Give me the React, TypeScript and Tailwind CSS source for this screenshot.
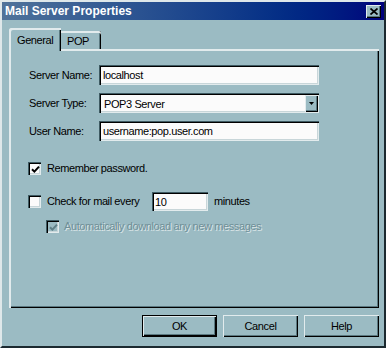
import React from "react";

const raised =
  "shadow-[inset_1px_1px_0_#e2ebed,inset_-1px_-1px_0_#000000,inset_-2px_-2px_0_#5a7880]";
const sunken =
  "shadow-[inset_1px_1px_0_#3e5a62,inset_2px_2px_0_#000000,inset_-1px_-1px_0_#e2ebed,inset_-2px_-2px_0_#c8d6d9]";

function Check({ disabled }: { disabled?: boolean }) {
  return (
    <svg width="9" height="9" viewBox="0 0 9 9" className="block">
      <path
        d="M1 4.2 L3.4 6.6 L8 1.6"
        fill="none"
        stroke={disabled ? "#5f7f87" : "#000"}
        strokeWidth="2"
      />
    </svg>
  );
}

function CheckBox({ checked, disabled }: { checked?: boolean; disabled?: boolean }) {
  return (
    <div
      className={`w-[13px] h-[13px] shrink-0 flex items-center justify-center pt-[1px] pl-[1px] ${sunken} ${
        disabled ? "bg-[#9bbbc3]" : "bg-[#fbfbfb]"
      }`}
    >
      {checked ? <Check disabled={disabled} /> : null}
    </div>
  );
}

function Field({ value, w }: { value: string; w: string }) {
  return (
    <div className={`${w} h-[20px] bg-[#fbfbfb] ${sunken} flex items-center pl-[4px] pt-[1px] text-black whitespace-nowrap`}>
      {value}
    </div>
  );
}

function Btn({ label, def }: { label: string; def?: boolean }) {
  return (
    <div
      className={`w-[75px] h-[22px] box-border ${def ? "border border-black" : ""} bg-[#9bbbc3] ${raised} flex items-center justify-center text-black`}
    >
      {label}
    </div>
  );
}

export default function App() {
  return (
    <div className="w-[386px] h-[348px] box-border bg-[#9bbbc3] border-2 border-t-[#dfe8ea] border-l-[#dfe8ea] border-r-[#1c2a30] border-b-[#1c2a30] flex flex-col font-['Liberation_Sans',Arial,sans-serif] text-[11px] tracking-[-0.4px] leading-none text-black select-none whitespace-nowrap">
      {/* Title bar */}
      <div className="h-[18px] shrink-0 flex items-center pl-[3px] pr-[3px] bg-gradient-to-r from-[#50739a] to-[#00007c]">
        <span className="font-bold text-[12px] tracking-normal text-white">
          Mail Server Properties
        </span>
        <div className={`ml-auto w-[15px] h-[13px] bg-[#9bbbc3] ${raised} flex items-center justify-center`}>
          <svg width="8" height="7" viewBox="0 0 8 7" className="block">
            <path d="M0.5 0.5 L7.5 6.5 M7.5 0.5 L0.5 6.5" stroke="#000" strokeWidth="1.7" fill="none" />
          </svg>
        </div>
      </div>

      {/* Tabs */}
      <div className="pt-[8px] pl-[7px] h-[29px] shrink-0 flex items-start">
        <div className="relative z-10 w-[52px] h-[23px] bg-[#9bbbc3] rounded-tl-[2px] shadow-[inset_2px_2px_0_#e2ebed,inset_-1px_0_0_#000000,inset_-2px_0_0_#5a7880] flex items-center pl-[8px] pt-[1px]">
          General
        </div>
        <div className="mt-[3px] w-[40px] h-[18px] bg-[#9bbbc3] rounded-tr-[2px] shadow-[inset_0_2px_0_#e2ebed,inset_-1px_0_0_#000000,inset_-2px_0_0_#5a7880] flex items-center pl-[6px] pt-[2px]">
          POP
        </div>
      </div>

      {/* Panel */}
      <div className="ml-[7px] w-[370px] h-[259px] shrink-0 bg-[#9bbbc3] shadow-[inset_2px_2px_0_#e2ebed,inset_-1px_-1px_0_#000000,inset_-2px_-2px_0_#5a7880] pt-[16px] pl-[19px] flex flex-col">
        <div className="flex items-center h-[20px]">
          <div className="w-[71px] pl-[1px]">Server Name:</div>
          <Field value="localhost" w="w-[220px]" />
        </div>
        <div className="flex items-center h-[20px] mt-[8px]">
          <div className="w-[71px] pl-[1px]">Server Type:</div>
          <div className={`w-[220px] h-[20px] bg-[#fbfbfb] ${sunken} flex pt-[2px] pl-[2px] pr-[1px] pb-[1px]`}>
            <div className="flex-1 flex items-center pl-[3px] pt-[1px]">POP3 Server</div>
            <div className={`w-[13px] h-full bg-[#9bbbc3] ${raised} flex items-center justify-center pb-[1px]`}>
              <svg width="5" height="3" viewBox="0 0 5 3" className="block">
                <path d="M0 0 H5 L2.5 3 Z" fill="#000" />
              </svg>
            </div>
          </div>
        </div>
        <div className="flex items-center h-[20px] mt-[8px]">
          <div className="w-[71px] pl-[1px]">User Name:</div>
          <Field value="username:pop.user.com" w="w-[220px]" />
        </div>

        <div className="flex items-center h-[13px] mt-[21px] gap-[6px]">
          <CheckBox checked />
          <span>Remember password.</span>
        </div>

        <div className="flex items-center h-[19px] mt-[17px]">
          <CheckBox />
          <span className="ml-[6px] w-[105px]">Check for mail every</span>
          <div className={`w-[56px] h-[19px] bg-[#fbfbfb] ${sunken} flex items-center pl-[3px] pt-[1px]`}>10</div>
          <span className="ml-[6px]">minutes</span>
        </div>

        <div className="flex items-center h-[13px] mt-[9px] pl-[18px] gap-[5px]">
          <CheckBox checked disabled />
          <span className="text-[#6f8f97] [text-shadow:1px_1px_0_#dbe6e8]">
            Automatically download any new messages
          </span>
        </div>
      </div>

      {/* Buttons */}
      <div className="mt-[7px] flex justify-end gap-[6px] pr-[5px]">
        <Btn label="OK" def />
        <Btn label="Cancel" />
        <Btn label="Help" />
      </div>
    </div>
  );
}
